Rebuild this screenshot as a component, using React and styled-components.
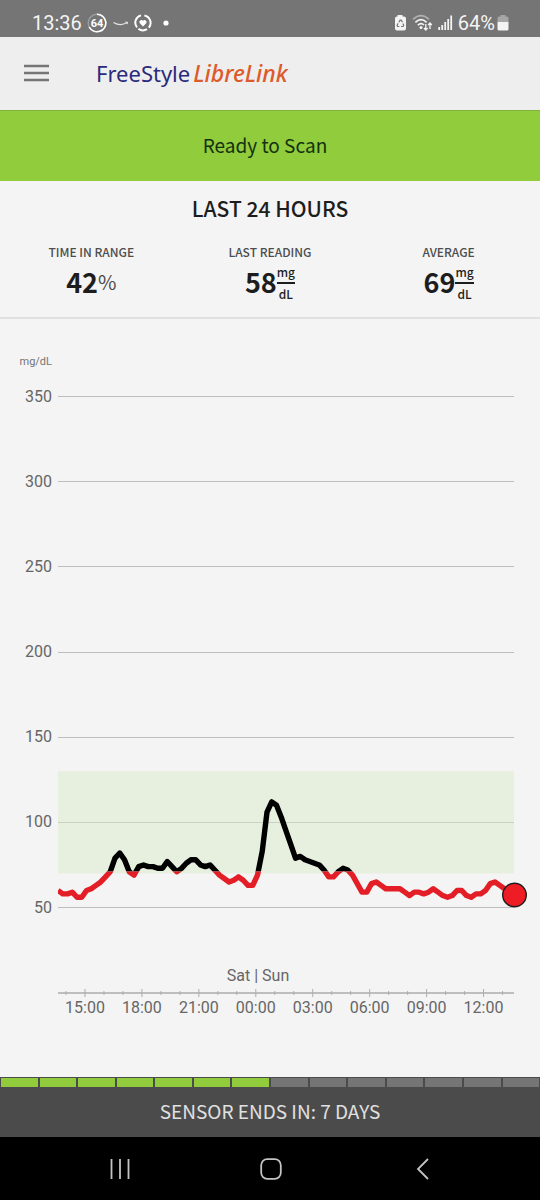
import React from 'react'
import styled, { createGlobalStyle } from 'styled-components'

const GlobalStyle = createGlobalStyle`
  * {
    box-sizing: border-box;
  }
  body {
    margin: 0;
    background: #f4f4f4;
    font-family: 'Noto Sans CJK SC', 'Noto Sans', sans-serif;
    color: #1d1d1d;
  }
`

const Screen = styled.div`
  display: flex;
  flex-direction: column;
  min-height: 100vh;
`

const StatusBar = styled.div`
  display: flex;
  justify-content: space-between;
  align-items: center;
  height: 37px;
  padding: 8px 31px 0 32px;
  background: #757575;
  color: #f4f4f4;
  font-family: Roboto, sans-serif;
  font-size: 20px;
  line-height: 24px;
`

const StatusGroup = styled.div`
  display: flex;
  align-items: center;
  gap: ${(props) => props.$gap || 5}px;
`

const Header = styled.header`
  display: flex;
  align-items: center;
  gap: 47px;
  height: 73px;
  padding: 0 24px 2px;
  background: #eeeeee;
`

const MenuButton = styled.button`
  display: flex;
  padding: 0;
  border: 0;
  background: none;
`

const Logo = styled.h1`
  margin: 0;
  font-family: 'Noto Sans', sans-serif;
  font-size: 22px;
  font-weight: 400;
  line-height: 30px;
  color: #2a2a7c;
`

const LogoAccent = styled.em`
  margin-left: 3px;
  font-size: 23px;
  font-weight: 500;
  color: #dd5a2b;
`

const ScanBanner = styled.button`
  height: 71px;
  padding: 0 10px 2px 0;
  border: 0;
  border-top: 1px solid #7fb23a;
  background: #90cc3c;
  color: #14310f;
  font-family: inherit;
  font-size: 19px;
  line-height: 28px;
`

const Summary = styled.section`
  padding: 11px 2px 14px;
  border-bottom: 2px solid #e0e0e0;
`

const SummaryTitle = styled.h2`
  margin: 0;
  font-size: 21px;
  font-weight: 500;
  line-height: 32px;
  text-align: center;
`

const Stats = styled.div`
  display: grid;
  grid-template-columns: repeat(3, 1fr);
  margin-top: 20px;
`

const Stat = styled.div`
  display: flex;
  flex-direction: column;
  align-items: center;
`

const StatLabel = styled.div`
  font-size: 12px;
  font-weight: 500;
  line-height: 16px;
  color: #4d4d4d;
`

const StatValue = styled.div`
  display: flex;
  align-items: center;
  height: 43px;
  font-size: 27px;
  font-weight: 700;
  line-height: 43px;
`

const Percent = styled.span`
  font-size: 20px;
  font-weight: 400;
  color: #4d4d4d;
`

const Fraction = styled.span`
  display: flex;
  flex-direction: column;
  padding-top: 2px;
  font-size: 12px;
  font-weight: 500;
  line-height: 20px;
  text-align: center;
`

const FractionTop = styled.span`
  border-bottom: 2px solid #1d1d1d;
`

const ChartArea = styled.main`
  flex: 1;

  svg {
    display: block;
    width: 100%;
    height: auto;
    font-family: Roboto, sans-serif;
    font-size: 16px;
  }
`

const UnitLabel = styled.text`
  font-size: 11px;
`

const SensorDays = styled.div`
  display: flex;
  gap: 2px;
  height: 10px;
  padding: 1px 1px 0;
  background: #4b4b4b;
`

const SensorDay = styled.div`
  flex: 1;
  background: ${(props) => (props.$left ? '#90cc3c' : '#757575')};
`

const SensorBar = styled.div`
  height: 50px;
  background: #4b4b4b;
  color: #e0e0e0;
  font-size: 19px;
  line-height: 48px;
  text-align: center;
`

const NavBar = styled.nav`
  display: flex;
  justify-content: space-around;
  align-items: center;
  height: 63px;
  padding: 0 42px 0 44px;
  background: #000;
`

const NavButton = styled.button`
  display: flex;
  padding: 0;
  border: 0;
  background: none;
`

// one reading every 15 minutes, 24 hours
const readings = [
  60, 58, 58, 59, 56, 56, 60, 61, 63, 65, 68, 71, 79, 82, 78, 71,
  69, 74, 75, 74, 74, 73, 73, 77, 74, 71, 73, 76, 78, 78, 75, 74,
  75, 72, 69, 67, 65, 66, 68, 66, 63, 63, 69, 83, 106, 112, 110, 103,
  95, 87, 79, 80, 78, 77, 76, 75, 72, 68, 68, 71, 73, 72, 69, 64,
  59, 59, 64, 65, 63, 61, 61, 61, 61, 59, 57, 59, 59, 58, 59, 61,
  59, 57, 56, 57, 60, 60, 57, 56, 58, 58, 60, 64, 65, 63, 61, 59,
  57.5,
]
const levels = [350, 300, 250, 200, 150, 100, 50]
const hours = ['15:00', '18:00', '21:00', '00:00', '03:00', '06:00', '09:00', '12:00']

const LEFT = 58
const RIGHT = 514
const HOUR = 19
const AXIS = 674
const RANGE_LOW = 70
const RANGE_HIGH = 130

const toY = (value) => 588.5 - (value - 50) * 1.7033
const toX = (index) => LEFT + (index * (RIGHT - LEFT)) / (readings.length - 1)

const GlucoseChart = () => {
  const points = readings.map((value, i) => `${toX(i)},${toY(value)}`).join(' ')
  const low = toY(RANGE_LOW)
  // the line turns red just above the lower limit
  const split = low - 2
  return (
    <svg viewBox="0 0 540 758" role="img" aria-label="Glucose, mg/dL">
      <defs>
        <clipPath id="inRange"><rect x={LEFT} y="0" width={RIGHT - LEFT} height={split} /></clipPath>
        <clipPath id="belowRange"><rect x={LEFT} y={split} width={RIGHT - LEFT} height="100" /></clipPath>
      </defs>
      <UnitLabel x="52" y="46" textAnchor="end" fill="#757575">mg/dL</UnitLabel>
      {levels.map((level) => (
        <g key={level}>
          <text x="52" y={toY(level) + 5} textAnchor="end" fill="#666">{level}</text>
          <line x1={LEFT} x2={RIGHT} y1={Math.floor(toY(level)) + 0.5} y2={Math.floor(toY(level)) + 0.5} stroke="#bdbdbd" />
        </g>
      ))}
      <rect x={LEFT} y={toY(RANGE_HIGH)} width={RIGHT - LEFT} height={low - toY(RANGE_HIGH)} fill="#d6ebc4" fillOpacity="0.45" />
      <g fill="none" strokeWidth="5.4" strokeLinejoin="round">
        <polyline points={points} stroke="#000" clipPath="url(#inRange)" />
        <polyline points={points} stroke="#e31e26" clipPath="url(#belowRange)" />
      </g>
      <circle cx="514.5" cy="576" r="11.8" fill="#ee1c25" stroke="#1d1d1d" strokeWidth="1.4" />
      <text x="258" y="662" textAnchor="middle" fill="#666">Sat | Sun</text>
      <line x1={LEFT} x2={RIGHT} y1={AXIS} y2={AXIS} stroke="#adadad" strokeWidth="1.4" />
      {Array.from({ length: 24 }, (_, i) => {
        const size = i % 3 === 1 ? 4 : 2
        const x = 66 + i * (HOUR - 0.02)
        return <line key={i} x1={x} x2={x} y1={AXIS - size} y2={AXIS + size} stroke="#adadad" />
      })}
      {hours.map((hour, i) => (
        <text key={hour} x={85 + i * 56.93} y="694" textAnchor="middle" fill="#666">{hour}</text>
      ))}
    </svg>
  )
}

const App = () => {
  return (
    <>
      <GlobalStyle />
      <Screen>
        <StatusBar>
          <StatusGroup>
            <span>13:36</span>
            <svg width="20" height="20" viewBox="0 0 20 20">
              <circle cx="10" cy="10" r="8.8" fill="none" stroke="#9e9e9e" strokeWidth="1.4" />
              <path d="M10 1.2A8.8 8.8 0 1 1 2.2 14" fill="none" stroke="#fff" strokeWidth="1.6" />
              <text x="10" y="14" fontSize="11" fontWeight="700" textAnchor="middle" fill="#fff">64</text>
            </svg>
            <svg width="17" height="20" viewBox="0 0 17 20">
              <path d="M1.500 9.400Q8.500 13.800 15 9.600M13.400 9l2 .4-.4 1.600" fill="none" stroke="#e4e4e4" strokeWidth="1.200" />
            </svg>
            <svg width="18" height="20" viewBox="0 0 18 20">
              <g fill="none" stroke="#fff" strokeWidth="2">
                <path d="M7 2.400A7.500 7.500 0 0 0 3 14.400" />
                <path d="M4.400 15.800A7.500 7.500 0 0 0 13 16.200" />
                <path d="M10.400 2.400A7.500 7.500 0 0 1 14.800 14.600" />
              </g>
              <path d="M9 13.400L5.800 10.200a1.900 1.900 0 0 1 3.200-2.400 1.900 1.900 0 0 1 3.200 2.400z" fill="#fff" />
            </svg>
            <svg width="18" height="20" viewBox="0 0 18 20">
              <circle cx="9" cy="10" r="2.600" fill="#fff" />
            </svg>
          </StatusGroup>
          <StatusGroup>
            <svg width="14" height="18" viewBox="0 0 14 18">
              <path d="M4.500 1h5v1.500H11a2 2 0 0 1 2 2v10a2 2 0 0 1-2 2H4a2 2 0 0 1-2-2v-10a2 2 0 0 1 2-2h.5z" fill="#f4f4f4" />
              <path d="M5.900 8.200L7.100 6.200h1l1.400 2M9.900 9.600l.8 1.600-.6 1.300H8.100M6.300 12.500H4.500l-.4-1.300 1-1.800" fill="none" stroke="#757575" strokeWidth="1.200" />
            </svg>
            <svg width="21" height="18" viewBox="0 0 21 18">
              <g fill="none" stroke="#f4f4f4" strokeWidth="1.600">
                <path d="M1 5.400Q9 -2 17 5.400" stroke="#b0b0b0" />
                <path d="M3.400 8.400Q9 3 14.600 8.400" />
                <path d="M5.800 11.200Q9 8 12 11" />
              </g>
              <circle cx="9" cy="13.600" r="1.500" fill="#f4f4f4" />
              <path d="M13.800 10v6M12 14l1.800 2 1.800-2M18 15V9M16.200 11L18 9l1.800 2" fill="none" stroke="#f4f4f4" strokeWidth="1.300" />
            </svg>
            <svg width="15" height="18" viewBox="0 0 15 18">
              <path d="M1.200 16v-3M4.200 16v-5M7.200 16V8M10.200 16V5M13.200 16V1.500" stroke="#f4f4f4" strokeWidth="1.800" />
            </svg>
            <StatusGroup $gap={2}>
              <span>64%</span>
              <svg width="12" height="18" viewBox="0 0 12 18">
                <path d="M3.500 1h5v1.500H10a1.500 1.500 0 0 1 1.500 1.500v4H.5V4A1.500 1.500 0 0 1 2 2.500h1.500z" fill="#a6a6a6" />
                <path d="M.5 8h11v7a1.500 1.500 0 0 1-1.500 1.500H2A1.500 1.500 0 0 1 .5 15z" fill="#f4f4f4" />
              </svg>
            </StatusGroup>
          </StatusGroup>
        </StatusBar>

        <Header>
          <MenuButton aria-label="Menu">
            <svg width="25" height="18" viewBox="0 0 25 18">
              <path d="M0 2h25M0 9h25M0 16h25" stroke="#757575" strokeWidth="2.400" />
            </svg>
          </MenuButton>
          <Logo>FreeStyle<LogoAccent>LibreLink</LogoAccent></Logo>
        </Header>

        <ScanBanner>Ready to Scan</ScanBanner>

        <Summary>
          <SummaryTitle>LAST 24 HOURS</SummaryTitle>
          <Stats>
            <Stat>
              <StatLabel>TIME IN RANGE</StatLabel>
              <StatValue>42<Percent>%</Percent></StatValue>
            </Stat>
            <Stat>
              <StatLabel>LAST READING</StatLabel>
              <StatValue>58<Fraction><FractionTop>mg</FractionTop><span>dL</span></Fraction></StatValue>
            </Stat>
            <Stat>
              <StatLabel>AVERAGE</StatLabel>
              <StatValue>69<Fraction><FractionTop>mg</FractionTop><span>dL</span></Fraction></StatValue>
            </Stat>
          </Stats>
        </Summary>

        <ChartArea>
          <GlucoseChart />
        </ChartArea>

        <SensorDays>
          {Array.from({ length: 14 }, (_, i) => <SensorDay key={i} $left={i < 7} />)}
        </SensorDays>
        <SensorBar>SENSOR ENDS IN: 7 DAYS</SensorBar>

        <NavBar>
          <NavButton aria-label="Recent apps">
            <svg width="22" height="22" viewBox="0 0 22 22">
              <path d="M2.500 1v20M11 1v20M19.500 1v20" stroke="#c4c4c4" strokeWidth="1.800" />
            </svg>
          </NavButton>
          <NavButton aria-label="Home">
            <svg width="22" height="22" viewBox="0 0 22 22">
              <rect x="1.200" y="1.200" width="19.600" height="19.600" rx="6" fill="none" stroke="#c4c4c4" strokeWidth="1.800" />
            </svg>
          </NavButton>
          <NavButton aria-label="Back">
            <svg width="22" height="22" viewBox="0 0 22 22">
              <path d="M17 1L7 11l10 10" fill="none" stroke="#c4c4c4" strokeWidth="1.800" />
            </svg>
          </NavButton>
        </NavBar>
      </Screen>
    </>
  )
}

export default App
